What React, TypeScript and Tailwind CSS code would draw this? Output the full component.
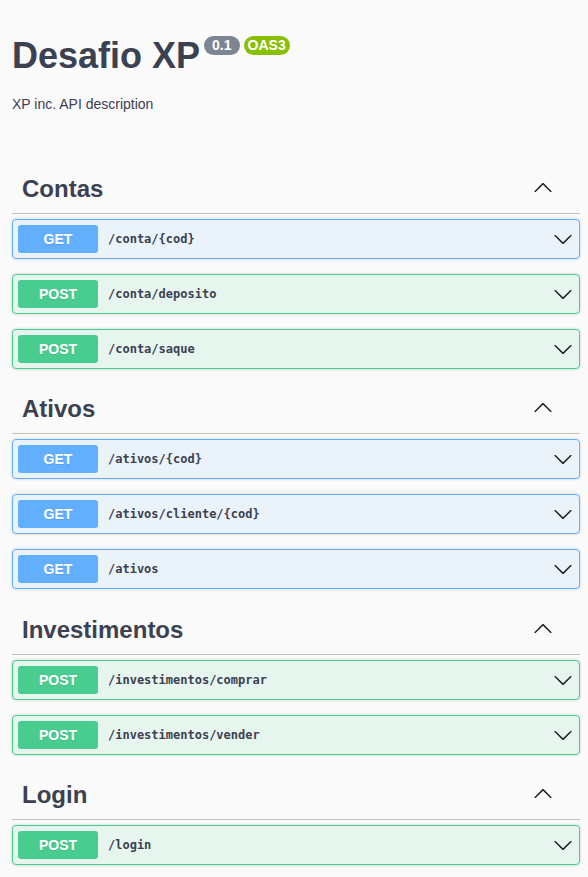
import React from 'react';
import clsx from 'clsx';

type Op = { method: 'GET' | 'POST'; path: string };
type Tag = { name: string; ops: Op[] };

const tags: Tag[] = [
  {
    name: 'Contas',
    ops: [
      { method: 'GET', path: '/conta/{cod}' },
      { method: 'POST', path: '/conta/deposito' },
      { method: 'POST', path: '/conta/saque' },
    ],
  },
  {
    name: 'Ativos',
    ops: [
      { method: 'GET', path: '/ativos/{cod}' },
      { method: 'GET', path: '/ativos/cliente/{cod}' },
      { method: 'GET', path: '/ativos' },
    ],
  },
  {
    name: 'Investimentos',
    ops: [
      { method: 'POST', path: '/investimentos/comprar' },
      { method: 'POST', path: '/investimentos/vender' },
    ],
  },
  {
    name: 'Login',
    ops: [{ method: 'POST', path: '/login' }],
  },
];

const ARROW =
  'M17.418 6.109c.272-.268.709-.268.979 0s.271.701 0 .969l-7.908 7.83c-.27.268-.707.268-.979 0l-7.908-7.83c-.27-.268-.27-.701 0-.969.271-.268.709-.268.979 0L10 13.25l7.418-7.141z';

function Arrow({ up, className }: { up?: boolean; className?: string }) {
  return (
    <svg width="20" height="20" viewBox="0 0 20 20" className={className}>
      <path d={ARROW} fill="#1f1f1f" transform={up ? 'rotate(180 10 10)' : undefined} />
    </svg>
  );
}

function Opblock({ op }: { op: Op }) {
  const get = op.method === 'GET';
  return (
    <div
      className={clsx(
        'mb-[15px] flex h-10 items-center rounded border px-[5px] shadow-[0_0_3px_rgba(0,0,0,0.19)]',
        get ? 'border-[#61affe] bg-[#61affe]/10' : 'border-[#49cc90] bg-[#49cc90]/10'
      )}
    >
      <span
        className={clsx(
          'flex h-7 w-20 items-center justify-center rounded-[3px] text-[14px] font-bold text-white [text-shadow:0_1px_0_rgba(0,0,0,0.1)]',
          get ? 'bg-[#61affe]' : 'bg-[#49cc90]'
        )}
      >
        {op.method}
      </span>
      <span className="px-[10px] font-['DejaVu_Sans_Mono',monospace] text-[12px] font-semibold text-[#3b4151]">
        {op.path}
      </span>
      <Arrow className="ml-auto mr-px" />
    </div>
  );
}

export default function App() {
  return (
    <div className="min-h-screen bg-[#fafafa] pl-3 pr-2 font-['Liberation_Sans',Arial,sans-serif] text-[#3b4151]">
      {/* Info */}
      <div className="pt-[35px]">
        <div className="flex items-start">
          <h2 className="text-[36px] leading-[41px] font-bold">Desafio XP</h2>
          <span className="mt-px ml-[4px] h-[19px] rounded-full bg-[#7d8492] px-2 text-[14px] leading-[19px] font-bold text-white">
            0.1
          </span>
          <span className="mt-px ml-[4px] h-[19px] rounded-full bg-[#89bf04] px-1 text-[14px] leading-[19px] font-bold text-white">
            OAS3
          </span>
        </div>
        <p className="mt-5 text-[14px] leading-4">XP inc. API description</p>
      </div>

      {/* Tags */}
      <div className="mt-[52px]">
        {tags.map((tag, i) => (
          <section key={tag.name} className={clsx(i === 2 && 'pt-px')}>
            <h3 className="mb-[5px] flex h-[50px] items-center border-b border-[#3b4151]/30 pl-[10px] pr-[27px]">
              <span className="text-[24px] leading-[29px] font-bold">{tag.name}</span>
              <Arrow up className="mb-[2px] ml-auto" />
            </h3>
            {tag.ops.map((op) => (
              <Opblock key={op.method + op.path} op={op} />
            ))}
          </section>
        ))}
      </div>
    </div>
  );
}
